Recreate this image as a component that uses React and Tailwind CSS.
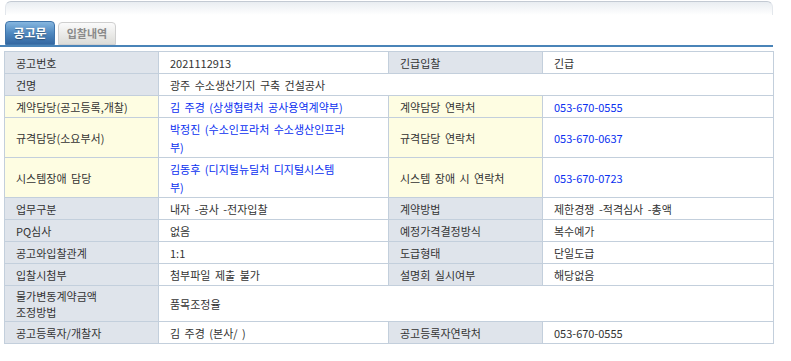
import React from "react";

const L = "bg-[#dfe4eb]";
const Y = "bg-[#fefde2]";
const td = "border border-[#c3cfdc] px-[11px] pt-[2px] pb-[1px] leading-[18px] align-middle";
const blue = "text-[#0a2ff0]";

function Row({ children }) {
  return <tr>{children}</tr>;
}

export default function App() {
  return (
    <div
      className="w-[791px] h-[361px] bg-white text-[#333] text-[11px]"
      style={{ fontFamily: '"Noto Sans CJK KR", "Noto Sans", sans-serif' }}
    >
      {/* top shadow box */}
      <div className="ml-[5px] mt-[1px] w-[768px] h-[14px] rounded-t-[6px] border-t border-x border-t-[#c3cad3] border-x-[#e3e7ec] bg-gradient-to-b from-[#e9edf1] to-white" />

      {/* Tabs */}
      <div className="mt-[6px] flex items-end gap-[3px] pl-[5px] h-[24px]">
        <div className="w-[50px] h-[24px] rounded-t-[4px] border border-[#3f74aa] bg-gradient-to-b from-[#86b6df] via-[#4f89c0] to-[#3468a2] flex items-center justify-center text-white font-bold text-[12px] [text-shadow:0_1px_1px_rgba(0,0,0,0.35)]">
          공고문
        </div>
        <div className="w-[58px] h-[23px] rounded-t-[4px] border border-[#cfcfcf] bg-gradient-to-b from-[#fbfbfb] to-[#dcdcd8] flex items-center justify-center text-[#8a8a8a] font-bold text-[11px]">
          입찰내역
        </div>
      </div>
      <div className="h-[2px] w-[773px] bg-[#4a84b8]" />

      {/* Table */}
      <div className="pl-[4px] pt-[4px]">
        <table className="w-[769px] table-fixed border-collapse [word-spacing:2px]">
          <colgroup>
            <col className="w-[154px]" />
            <col className="w-[230px]" />
            <col className="w-[154px]" />
            <col className="w-[231px]" />
          </colgroup>
          <tbody>
            <Row>
              <td className={`${td} ${L}`}>공고번호</td>
              <td className={td}>2021112913</td>
              <td className={`${td} ${L}`}>긴급입찰</td>
              <td className={td}>긴급</td>
            </Row>
            <Row>
              <td className={`${td} ${L}`}>건명</td>
              <td className={td} colSpan={3}>
                광주 수소생산기지 구축 건설공사
              </td>
            </Row>
            <Row>
              <td className={`${td} ${Y}`}>계약담당(공고등록,개찰)</td>
              <td className={`${td} ${blue}`}>김 주경 (상생협력처 공사용역계약부)</td>
              <td className={`${td} ${Y}`}>계약담당 연락처</td>
              <td className={`${td} ${blue}`}>053-670-0555</td>
            </Row>
            <Row>
              <td className={`${td} ${Y}`}>규격담당(소요부서)</td>
              <td className={`${td} ${blue}`}>
                박정진 (수소인프라처 수소생산인프라
                <br />부)
              </td>
              <td className={`${td} ${Y}`}>규격담당 연락처</td>
              <td className={`${td} ${blue}`}>053-670-0637</td>
            </Row>
            <Row>
              <td className={`${td} ${Y}`}>시스템장애 담당</td>
              <td className={`${td} ${blue}`}>
                김동후 (디지털뉴딜처 디지털시스템
                <br />부)
              </td>
              <td className={`${td} ${Y}`}>시스템 장애 시 연락처</td>
              <td className={`${td} ${blue}`}>053-670-0723</td>
            </Row>
            <Row>
              <td className={`${td} ${L}`}>업무구분</td>
              <td className={td}>내자 -공사 -전자입찰</td>
              <td className={`${td} ${L}`}>계약방법</td>
              <td className={td}>제한경쟁 -적격심사 -총액</td>
            </Row>
            <Row>
              <td className={`${td} ${L}`}>PQ심사</td>
              <td className={td}>없음</td>
              <td className={`${td} ${L}`}>예정가격결정방식</td>
              <td className={td}>복수예가</td>
            </Row>
            <Row>
              <td className={`${td} ${L}`}>공고와입찰관계</td>
              <td className={td}>1:1</td>
              <td className={`${td} ${L}`}>도급형태</td>
              <td className={td}>단일도급</td>
            </Row>
            <Row>
              <td className={`${td} ${L}`}>입찰시첨부</td>
              <td className={td}>첨부파일 제출 불가</td>
              <td className={`${td} ${L}`}>설명회 실시여부</td>
              <td className={td}>해당없음</td>
            </Row>
            <Row>
              <td className={`${td} ${L} !leading-[16px]`}>
                물가변동계약금액
                <br />
                조정방법
              </td>
              <td className={td} colSpan={3}>
                품목조정율
              </td>
            </Row>
            <Row>
              <td className={`${td} ${L}`}>공고등록자/개찰자</td>
              <td className={td}>김 주경 (본사/ )</td>
              <td className={`${td} ${L}`}>공고등록자연락처</td>
              <td className={td}>053-670-0555</td>
            </Row>
          </tbody>
        </table>
      </div>
    </div>
  );
}
